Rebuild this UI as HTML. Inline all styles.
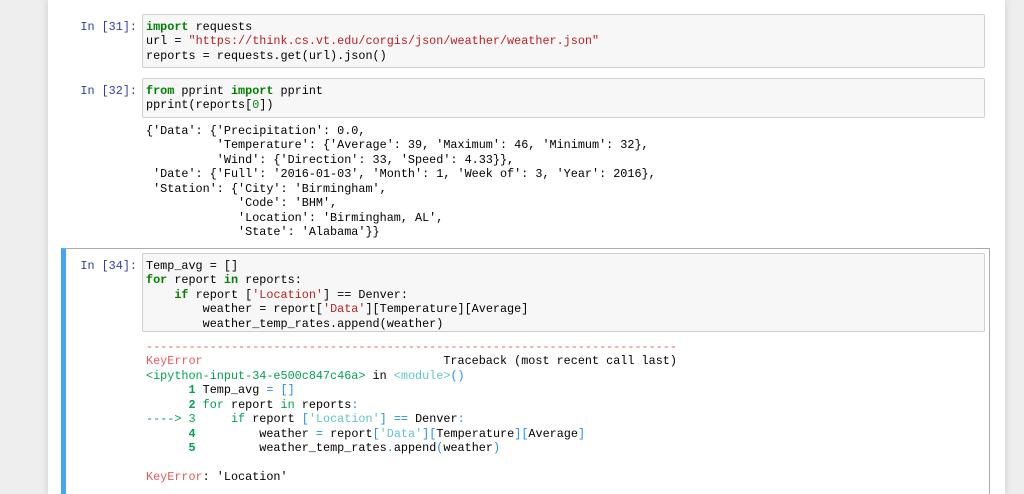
<!DOCTYPE html>
<html style="overflow:hidden;height:494px"><head><meta charset="utf-8"><style>
html,body{margin:0;width:1024px;height:494px;overflow:hidden;}
body{background:#eeeeee;position:relative;}
*{font-family:"Liberation Mono","DejaVu Sans Mono",monospace;font-size:11.8px;}
.page{position:absolute;left:48px;top:0;width:957px;height:494px;background:#fff;box-shadow:0 0 8px rgba(0,0,0,.15);}
.box{position:absolute;left:142px;width:841px;background:#f7f7f7;border:1px solid #cfcfcf;border-radius:2px;}
pre{margin:0;line-height:14.45px;position:absolute;left:146px;color:#000;white-space:pre;font-family:"Liberation Mono",monospace;}
.p{position:absolute;left:60px;width:77px;text-align:right;color:#303F9F;line-height:14.45px;white-space:pre;}
.k{color:#008000;font-weight:bold}
.s{color:#BA2121}
.n{color:#008800}
.r{color:#e75c58}
.g{color:#00a250}
.gb{color:#00a250;font-weight:bold}
.c{color:#60c6c8}
.b{color:#208ffb}
.sel{position:absolute;left:61px;top:248px;width:923px;height:260px;border:1px solid #ababab;border-left:5px solid #42a5f5;}
</style></head><body>
<div class="page"></div>
<div class="sel"></div>
<div class="box" style="top:14px;height:52px"></div>
<div class="p" style="top:20px">In [31]:</div>
<pre style="top:20px"><span class="k">import</span> requests
url = <span class="s">"https://think.cs.vt.edu/corgis/json/weather/weather.json"</span>
reports = requests.get(url).json()</pre>
<div class="box" style="top:78px;height:38px"></div>
<div class="p" style="top:84px">In [32]:</div>
<pre style="top:84px"><span class="k">from</span> pprint <span class="k">import</span> pprint
pprint(reports[<span class="n">0</span>])</pre>
<pre style="top:124px">{'Data': {'Precipitation': 0.0,
          'Temperature': {'Average': 39, 'Maximum': 46, 'Minimum': 32},
          'Wind': {'Direction': 33, 'Speed': 4.33}},
 'Date': {'Full': '2016-01-03', 'Month': 1, 'Week of': 3, 'Year': 2016},
 'Station': {'City': 'Birmingham',
             'Code': 'BHM',
             'Location': 'Birmingham, AL',
             'State': 'Alabama'}}</pre>
<div class="box" style="top:253px;height:77px"></div>
<div class="p" style="top:259px">In [34]:</div>
<pre style="top:259px">Temp_avg = []
<span class="k">for</span> report <span class="k">in</span> reports:
    <span class="k">if</span> report [<span class="s">'Location'</span>] == Denver:
        weather = report[<span class="s">'Data'</span>][Temperature][Average]
        weather_temp_rates.append(weather)</pre>
<pre style="top:340px"><span class="r">---------------------------------------------------------------------------</span>
<span class="r">KeyError</span>                                  Traceback (most recent call last)
<span class="g">&lt;ipython-input-34-e500c847c46a&gt;</span> in <span class="c">&lt;module&gt;</span><span class="b">()</span>
<span class="gb">      1</span> Temp_avg <span class="b">=</span> <span class="b">[</span><span class="b">]</span>
<span class="gb">      2</span> <span class="g">for</span> report <span class="g">in</span> reports<span class="b">:</span>
<span class="g">----&gt; 3</span><span class="g">     if</span> report <span class="b">[</span><span class="c">'Location'</span><span class="b">]</span> <span class="b">==</span> Denver<span class="b">:</span>
<span class="gb">      4</span>         weather <span class="b">=</span> report<span class="b">[</span><span class="c">'Data'</span><span class="b">]</span><span class="b">[</span>Temperature<span class="b">]</span><span class="b">[</span>Average<span class="b">]</span>
<span class="gb">      5</span>         weather_temp_rates<span class="b">.</span>append<span class="b">(</span>weather<span class="b">)</span>

<span class="r">KeyError</span>: 'Location'</pre>
</body></html>
